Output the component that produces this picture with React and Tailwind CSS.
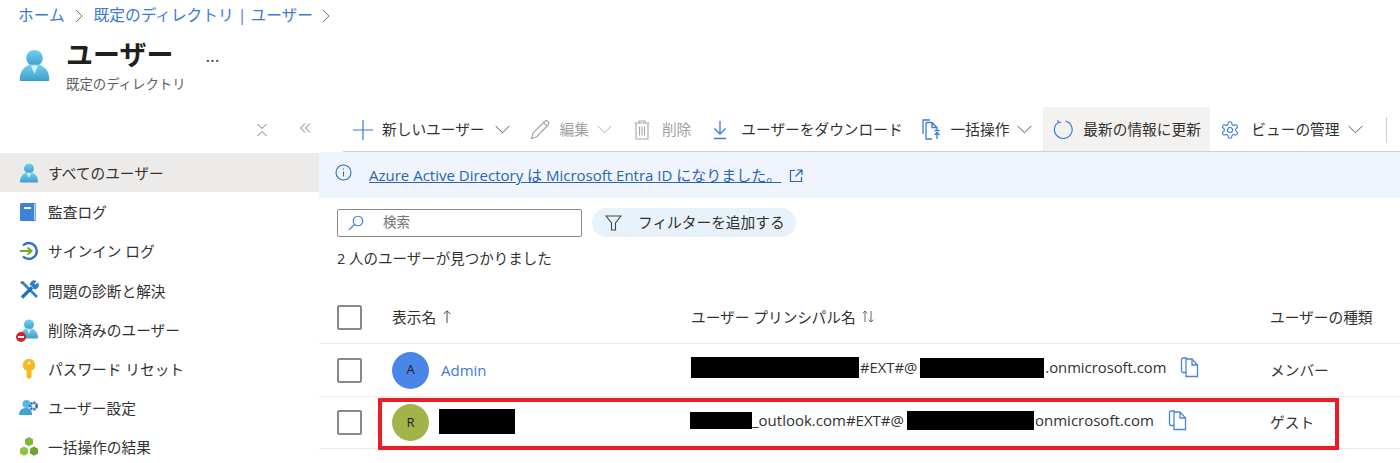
import React from "react";

const FONT = "font-['Open_Sans','Noto_Sans_CJK_JP',sans-serif]";

function Person({ size = 24, id = "p" }) {
  return (
    <svg width={size} height={size} viewBox="0 0 36 36" className="shrink-0">
      <defs>
        <linearGradient id={id} x1="0" y1="0" x2="0" y2="1">
          <stop offset="0" stopColor="#6fd3f3" />
          <stop offset="1" stopColor="#3f9cc9" />
        </linearGradient>
      </defs>
      <circle cx="18" cy="10" r="9" fill={`url(#${id})`} />
      <path d="M2 35 C1 24 8 18 14 17 L22 17 C28 18 35 24 34 35 Z" fill={`url(#${id})`} />
      <path d="M14 18 L22 18 L18 27 Z" fill="#d8f2fb" />
    </svg>
  );
}

function Copy() {
  return (
    <svg width="19" height="21" viewBox="0 0 19 21" fill="none" stroke="#4a86d8" strokeWidth="1.3" className="shrink-0">
      <path d="M6 15.5 H3 a1.5 1.5 0 0 1 -1.5 -1.5 V2.5 a1.5 1.5 0 0 1 1.5 -1.5 H7" />
      <path d="M6 2 H12 L17.5 8 V19.5 H6 Z" fill="#fff" />
      <path d="M12 2 V8 H17.5" />
    </svg>
  );
}

const navIcons = [
  <Person size={20} id="n1" />,
  <svg width="18" height="20" viewBox="0 0 18 20"><rect x="1" y="1" width="16" height="18" rx="1.5" fill="#3f83d9" /><rect x="15" y="2" width="1.5" height="16" fill="#bcd6f3" /><rect x="5" y="5" width="7" height="2" fill="#fff" /></svg>,
  <svg width="20" height="20" viewBox="0 0 20 20" fill="none"><path d="M4 4.5 A8 8 0 1 1 4 15.5" stroke="#2f6fc4" strokeWidth="2.4" /><path d="M1 10 H12 M8.5 6.5 L12.5 10 L8.5 13.5" stroke="#6fad2e" strokeWidth="2" /></svg>,
  <svg width="20" height="20" viewBox="0 0 20 20" fill="none"><path d="M3 2 L18 17" stroke="#2f7fc4" strokeWidth="2.6" /><path d="M2 3.5 L4 1.5" stroke="#5a7388" strokeWidth="2.4" /><path d="M3 17.5 L13 7.5" stroke="#1f6fb8" strokeWidth="3.2" /><path d="M11.5 5 A3.6 3.6 0 0 1 16.5 1.3 L14.5 4 L16 5.5 L18.8 3.5 A3.6 3.6 0 0 1 14.5 8.5" fill="#2f7fc4" stroke="#2f7fc4" strokeWidth="1.2" /></svg>,
  <span className="relative flex"><Person size={20} id="n2" /><span className="absolute -left-[3px] bottom-[-3px] flex h-[10px] w-[10px] items-center justify-center rounded-full bg-[#d4202a]"><span className="h-[2px] w-[6px] bg-white" /></span></span>,
  <svg width="20" height="20" viewBox="0 0 20 20"><path d="M10 0 A6 6 0 0 1 12.5 11.5 V18 L10 20 L7.5 18 V11.5 A6 6 0 0 1 10 0 Z" fill="#f5b921" /><circle cx="10" cy="4" r="1.5" fill="#fff3c4" /></svg>,
  <svg width="20" height="20" viewBox="0 0 20 20"><circle cx="7.5" cy="6" r="4" fill="#55b7e3" /><path d="M0 17 C0 11 4 10 7.5 10 C11 10 13 12 13 17 Z" fill="#45a3d3" /><circle cx="14.5" cy="8" r="3.2" fill="#fff" stroke="#2f6fd0" strokeWidth="2.6" strokeDasharray="2.2 0.7" /></svg>,
  <svg width="20" height="20" viewBox="0 0 20 20"><path d="M10 0 L14 2.2 V7 L10 9.2 L6 7 V2.2 Z" fill="#80b53a" /><path d="M5 9.5 L9 11.7 V16.5 L5 18.7 L1 16.5 V11.7 Z" fill="#8cc63f" /><path d="M15 9.5 L19 11.7 V16.5 L15 18.7 L11 16.5 V11.7 Z" fill="#6fa52e" /></svg>,
];

const nav = [
  "すべてのユーザー",
  "監査ログ",
  "サインイン ログ",
  "問題の診断と解決",
  "削除済みのユーザー",
  "パスワード リセット",
  "ユーザー設定",
  "一括操作の結果",
];

function Chevron({ light }) {
  return (
    <svg width="15" height="9" viewBox="0 0 15 9" fill="none" stroke={light ? "#b3b1af" : "#555"} strokeWidth="1" className="shrink-0">
      <path d="M0.7 1 L7.5 7.8 L14.3 1" />
    </svg>
  );
}

function Crumb() {
  return (
    <svg width="8" height="14" viewBox="0 0 8 14" fill="none" stroke="#777" strokeWidth="1" className="shrink-0">
      <path d="M1 1 L7 7 L1 13" />
    </svg>
  );
}

function Bar({ className }) {
  return <span className={`inline-block shrink-0 bg-black ${className}`} />;
}

function Checkbox() {
  return <span className="block h-[25px] w-[25px] rounded-[2px] border-2 border-[#8a8886] bg-white" />;
}

function Avatar({ letter, color }) {
  return (
    <span className={`flex h-[37px] w-[37px] shrink-0 items-center justify-center rounded-full text-[13px] text-[#201f1e] ${color}`}>
      {letter}
    </span>
  );
}

export default function App() {
  return (
    <div className={`relative flex h-[463px] w-[1400px] flex-col overflow-hidden bg-white text-[14.7px] text-[#323130] ${FONT}`}>
      <header className="h-[107px] shrink-0 pl-[18px]">
        <nav className="flex h-[31px] items-center text-[15.7px] text-[#3a7bd5]">
          <span>ホーム</span>
          <span className="ml-[10px] mr-[11px]"><Crumb /></span>
          <span>既定のディレクトリ | ユーザー</span>
          <span className="ml-[9px]"><Crumb /></span>
        </nav>
        <div className="mt-[9px] flex items-start">
          <span className="mt-[9px]"><Person size={33} id="h" /></span>
          <div className="ml-[15px]">
            <div className="flex items-center">
              <h1 className="text-[27px] font-semibold leading-[30px] text-[#201f1e]">ユーザー</h1>
              <span className="ml-[32px] text-[18px] leading-none text-[#444]">…</span>
            </div>
            <p className="mt-[5px] text-[13.4px] leading-[18px] text-[#605e5c]">既定のディレクトリ</p>
          </div>
        </div>
      </header>

      <div className="flex min-h-0 flex-1">
        <aside className="w-[319px] shrink-0">
          <div className="flex h-[46px] items-center justify-end pr-[8px]">
            <svg width="12" height="14" viewBox="0 0 12 14" fill="none" stroke="#777" strokeWidth="1" className="mr-[31px]">
              <path d="M1.5 1 L6 5.5 L10.5 1 M1.5 13 L6 8.5 L10.5 13" />
            </svg>
            <svg width="12" height="12" viewBox="0 0 12 12" fill="none" stroke="#777" strokeWidth="1" className="mb-[4px]">
              <path d="M6 1.5 L1.5 6 L6 10.5 M11 1.5 L6.5 6 L11 10.5" />
            </svg>
          </div>
          {nav.map((label, i) => (
            <div key={label} className={`flex h-[39.2px] items-center pl-[18px] ${i === 0 ? "bg-[#edebe9]" : ""}`}>
              <span className="flex w-[30px] justify-start pl-px">{navIcons[i]}</span>
              <span className="pt-px">{label}</span>
            </div>
          ))}
        </aside>

        <main className="min-w-0 flex-1">
          <div className="ml-[24px] flex h-[45px] items-center border-b border-[#d2d0ce] pl-[10px] pt-px">
            <svg width="20" height="20" viewBox="0 0 20 20" fill="none" stroke="#3a7bd5" strokeWidth="1.2" className="mr-[9px] shrink-0">
              <path d="M0 10 H20 M10 0 V20" />
            </svg>
            <span className="whitespace-nowrap">新しいユーザー</span>
            <span className="ml-[10px]"><Chevron /></span>
            <svg width="21" height="21" viewBox="0 0 21 21" fill="none" stroke="#a8a6a4" strokeWidth="1.2" className="ml-[20px] shrink-0">
              <path d="M1.5 19.5 L3 14 L15 2 Q16.5 1 18 2.5 Q19.5 4 18.5 5.5 L6.5 18 Z M13.5 3.5 L17 7" />
            </svg>
            <span className="ml-[9px] whitespace-nowrap text-[#a19f9d]">編集</span>
            <span className="ml-[8px]"><Chevron light /></span>
            <svg width="16" height="20" viewBox="0 0 16 20" fill="none" stroke="#a8a6a4" strokeWidth="1.1" className="ml-[22px] shrink-0">
              <path d="M0.5 3 H15.5 M5 3 V1 H11 V3 M2 3 V19 H14 V3 M5.5 6.5 V15.5 M8 6.5 V15.5 M10.5 6.5 V15.5" />
            </svg>
            <span className="ml-[12px] whitespace-nowrap text-[#a19f9d]">削除</span>
            <svg width="14" height="20" viewBox="0 0 14 20" fill="none" stroke="#3a7bd5" strokeWidth="1.3" className="ml-[22px] shrink-0">
              <path d="M7 1 V14 M1.5 8.5 L7 14 L12.5 8.5 M1 18.5 H13" />
            </svg>
            <span className="ml-[14px] whitespace-nowrap">ユーザーをダウンロード</span>
            <svg width="20" height="21" viewBox="0 0 20 21" fill="none" stroke="#3a7bd5" strokeWidth="1.3" className="ml-[19px] shrink-0">
              <path d="M1 15 V1 H8" />
              <path d="M4 3.5 H10 L15 8.5 V12 M4 3.5 V20 H10 M10 3.5 V8.5 H15 M15 20 V14 M12.5 16 L15 13.5 L17.5 16 M12.5 11.5 H17.5" />
            </svg>
            <span className="ml-[9px] whitespace-nowrap">一括操作</span>
            <span className="ml-[8px]"><Chevron /></span>
            <div className="ml-[11px] -mt-px flex h-[44px] w-[167px] shrink-0 items-center self-start bg-[#f3f2f1] pl-[10px] pt-px">
              <svg width="20" height="21" viewBox="0 0 21 21" fill="none" stroke="#3a7bd5" strokeWidth="1.2" className="shrink-0">
                <path d="M13 1.6 A9.3 9.3 0 1 1 5.5 3 M5 0.8 L5.7 3.3 L8.6 2.6" />
              </svg>
              <span className="ml-[10px] whitespace-nowrap">最新の情報に更新</span>
            </div>
            <svg width="20" height="20" viewBox="0 0 24 24" fill="none" stroke="#3a7bd5" strokeWidth="1.3" className="ml-[10px] shrink-0">
              <path d="M12.2 2h-.4a2 2 0 0 0-2 2v.2a2 2 0 0 1-1 1.7l-.4.3a2 2 0 0 1-2 0l-.2-.1a2 2 0 0 0-2.7.7l-.2.4a2 2 0 0 0 .7 2.7l.2.1a2 2 0 0 1 1 1.7v.5a2 2 0 0 1-1 1.7l-.2.1a2 2 0 0 0-.7 2.7l.2.4a2 2 0 0 0 2.7.7l.2-.1a2 2 0 0 1 2 0l.4.3a2 2 0 0 1 1 1.7v.2a2 2 0 0 0 2 2h.4a2 2 0 0 0 2-2v-.2a2 2 0 0 1 1-1.7l.4-.3a2 2 0 0 1 2 0l.2.1a2 2 0 0 0 2.7-.7l.2-.4a2 2 0 0 0-.7-2.7l-.2-.1a2 2 0 0 1-1-1.7v-.5a2 2 0 0 1 1-1.7l.2-.1a2 2 0 0 0 .7-2.7l-.2-.4a2 2 0 0 0-2.7-.7l-.2.1a2 2 0 0 1-2 0l-.4-.3a2 2 0 0 1-1-1.7V4a2 2 0 0 0-2-2z" />
              <circle cx="12" cy="12" r="3" />
            </svg>
            <span className="ml-[11px] whitespace-nowrap">ビューの管理</span>
            <span className="ml-[8px]"><Chevron /></span>
            <span className="ml-[23px] h-[26px] w-px shrink-0 bg-[#d2d0ce]" />
          </div>

          <div className="flex h-[46px] items-center bg-[#eff4fd] pl-[16px] pt-px">
            <svg width="17" height="17" viewBox="0 0 17 17" fill="none" stroke="#2f6fc4" strokeWidth="1.1" className="mb-[7px] shrink-0">
              <circle cx="8.5" cy="8.5" r="7.5" />
              <path d="M8.5 7.5 V12.5 M8.5 4.5 V5.8" />
            </svg>
            <a className="ml-[17px] whitespace-nowrap text-[15px] text-[#2a65ad] underline">Azure Active Directory は Microsoft Entra ID になりました。</a>
            <svg width="14" height="14" viewBox="0 0 14 14" fill="none" stroke="#2a65ad" strokeWidth="1.2" className="ml-[8px] shrink-0">
              <path d="M6 1.5 H1.5 V12.5 H12.5 V8 M8 1 H13 V6 M13 1 L6.5 7.5" />
            </svg>
          </div>

          <div className="pl-[18px]">
            <div className="flex items-center pt-[10px]">
              <div className="flex h-[28px] w-[245px] items-center rounded-[2px] border border-[#8a8886] pl-[10px]">
                <svg width="16" height="16" viewBox="0 0 16 16" fill="none" stroke="#3a7bd5" strokeWidth="1.1" className="shrink-0">
                  <circle cx="10" cy="6" r="4.8" />
                  <path d="M6.5 9.5 L1 15" />
                </svg>
                <span className="ml-[19px] text-[13.5px] text-[#767472]">検索</span>
              </div>
              <div className="ml-[10px] flex h-[29px] w-[204px] items-center rounded-full bg-[#e8f2fb] pl-[13px]">
                <svg width="17" height="16" viewBox="0 0 17 16" fill="none" stroke="#444" strokeWidth="1.1" className="shrink-0">
                  <path d="M1 1 H16 L10.5 8 V15 H6.5 V8 Z" />
                </svg>
                <span className="ml-[16px] whitespace-nowrap text-[14.7px]">フィルターを追加する</span>
              </div>
            </div>
            <p className="mt-[10px] h-[24px] text-[14.5px] leading-[24px]">2 人のユーザーが見つかりました</p>
          </div>

          <div className="mt-[24px] grid h-[49px] grid-cols-[55px_299px_579px_1fr] items-center border-b border-[#edebe9] pb-[4px] pl-[18px]">
            <Checkbox />
            <span className="flex items-center whitespace-nowrap">
              表示名
              <svg width="8" height="13" viewBox="0 0 8 13" fill="none" stroke="#444" strokeWidth="1" className="ml-[7px]"><path d="M4 13 V1 M0.7 4 L4 0.7 L7.3 4" /></svg>
            </span>
            <span className="flex items-center whitespace-nowrap">
              ユーザー プリンシパル名
              <svg width="12" height="13" viewBox="0 0 12 13" fill="none" stroke="#666" strokeWidth="1" className="ml-[6px]"><path d="M3 12 V1 M0.7 3.3 L3 1 L5.3 3.3 M9 1 V12 M6.7 9.7 L9 12 L11.3 9.7" /></svg>
            </span>
            <span className="whitespace-nowrap">ユーザーの種類</span>
          </div>

          <div className="grid h-[53px] grid-cols-[55px_299px_579px_1fr] items-center border-b border-[#edebe9] pl-[18px]">
            <Checkbox />
            <span className="flex items-center">
              <Avatar letter="A" color="bg-[#4a86e8]" />
              <span className="ml-[12px] text-[15px] text-[#3a7bd5]">Admin</span>
            </span>
            <span className="flex items-center pb-[5px] text-[14.8px]">
              <Bar className="h-[21px] w-[168px]" />
              <span className="ml-px">#EXT#@</span>
              <Bar className="ml-[3px] h-[20px] w-[124px]" />
              <span className="ml-px">.onmicrosoft.com</span>
              <span className="ml-[14px]"><Copy /></span>
            </span>
            <span>メンバー</span>
          </div>

          <div className="grid h-[52px] grid-cols-[55px_299px_579px_1fr] items-center border-b border-[#edebe9] pl-[18px]">
            <Checkbox />
            <span className="flex items-center">
              <Avatar letter="R" color="bg-[#a3b34a]" />
              <Bar className="ml-[10px] mb-[3px] h-[25px] w-[76px]" />
            </span>
            <span className="-ml-px flex items-center pb-[5px] text-[15px]">
              <Bar className="h-[17px] w-[62px]" />
              <span>_outlook.com#EXT#@</span>
              <Bar className="ml-[3px] h-[19px] w-[127px]" />
              <span className="ml-px">onmicrosoft.com</span>
              <span className="ml-[14px]"><Copy /></span>
            </span>
            <span>ゲスト</span>
          </div>
        </main>
      </div>

      <div className="pointer-events-none absolute left-[378px] top-[398px] h-[52px] w-[961px] border-4 border-[#ed1c24]" />
    </div>
  );
}
